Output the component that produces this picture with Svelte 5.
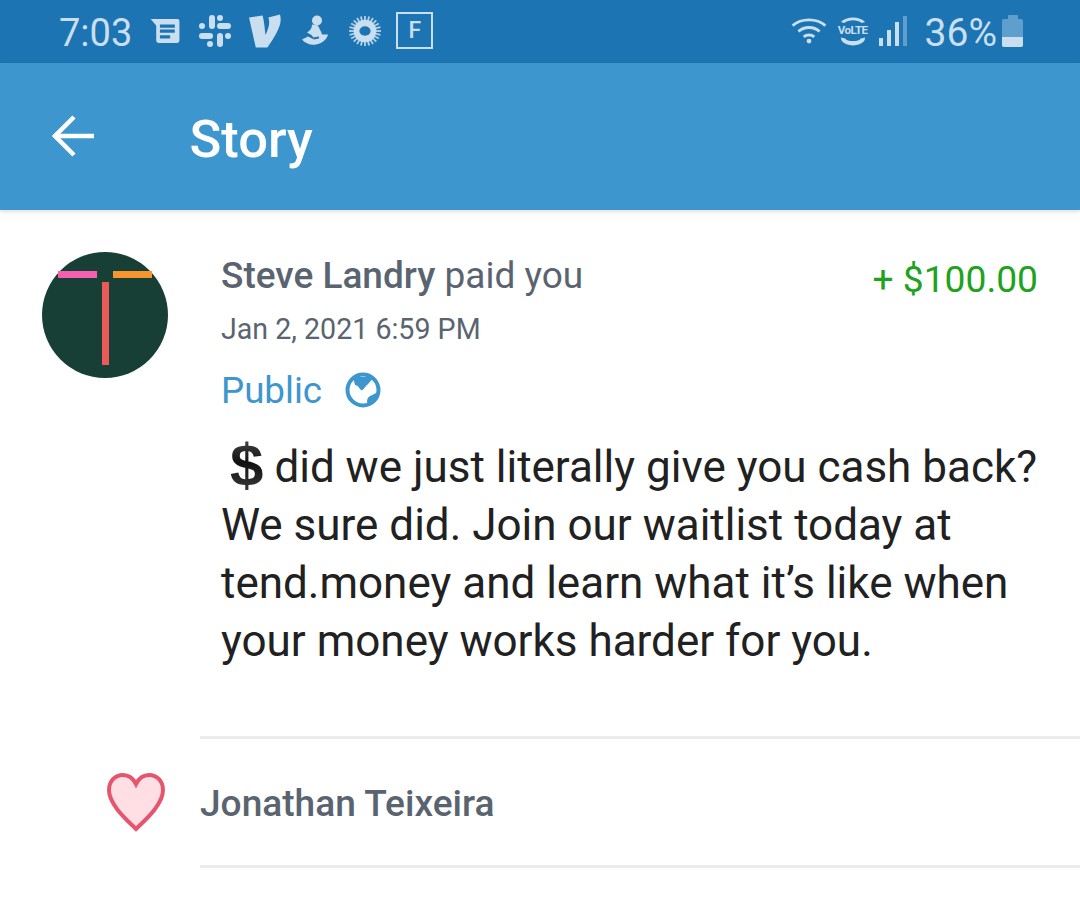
<script>
  const paragraph = [
    'did we just literally give you cash back?',
    'We sure did. Join our waitlist today at',
    'tend.money and learn what it’s like when',
    'your money works harder for you.'
  ];
</script>

<div class="page">
  <div class="status">
    <div class="status-left">
      <span class="time">7:03</span>
      <svg class="ic news" width="31" height="26" viewBox="0 0 32 28">
        <path fill="#c9dfef" d="M0 1H29a2 2 0 0 1 2 2V24a3 3 0 0 1-3 3H9a3 3 0 0 1-3-3V8Z"/>
        <path fill="#1c74b2" d="M10 7H26V10.500H10ZM10 12.500H26V16H10ZM10 18.500H21V22H10Z"/>
      </svg>
      <svg class="ic slack" width="32" height="32" viewBox="0 0 32 32" fill="#c9dfef">
        <rect x="10" y="0" width="6" height="14" rx="3"/>
        <rect x="18" y="18" width="6" height="14" rx="3"/>
        <rect x="0" y="18" width="14" height="6" rx="3"/>
        <rect x="18" y="8" width="14" height="6" rx="3"/>
        <circle cx="3" cy="11" r="3"/><circle cx="21" cy="3" r="3"/>
        <circle cx="29" cy="21" r="3"/><circle cx="11" cy="29" r="3"/>
      </svg>
      <svg class="ic venmo" width="32" height="34" viewBox="0 0 33 34">
        <path fill="#c9dfef" d="M0 3 14 1C15.500 6 16 13 17 21 20 15 22 9 20 3L32 0C33 4 33 8 31 13 29 19 24 27 19 34H7Z"/>
      </svg>
      <svg class="ic figure" width="27" height="31" viewBox="0 0 27 30" fill="#c9dfef">
        <circle cx="15" cy="5" r="5"/>
        <path d="M10 9 16 10C17 13 19 15 20 19L26 19C25 24 20 28 14 29 9 30 3 28 0 24L6 21 12 24C11 20 9 19 5 17 8 15 10 13 10 9Z"/>
        <path fill="#1c74b2" d="M11 22 17 21 17 23 12 24Z"/>
      </svg>
      <svg class="ic sun" width="34" height="32" viewBox="0 0 36 34">
        <g stroke="#c9dfef" stroke-width="2" opacity=".85">
          {#each Array(24) as _, i}
            <line x1="18" y1="17" x2={18 + 17 * Math.cos((i * Math.PI) / 12)} y2={17 + 16 * Math.sin((i * Math.PI) / 12)} />
          {/each}
        </g>
        <circle cx="18" cy="17" r="12" fill="#c9dfef"/>
        <ellipse cx="18" cy="17" rx="6" ry="5" fill="#1c74b2"/>
      </svg>
      <span class="fbox">F</span>
    </div>
    <div class="status-right">
      <svg class="ic" width="36" height="27" viewBox="0 0 36 28" fill="none" stroke="#c9dfef" stroke-width="3">
        <path d="M1 9C10 1 26 1 35 9"/><path d="M7 15C13 9.500 23 9.500 29 15"/><path d="M12.500 20.500C15.500 18 20.500 18 23.500 20.500"/>
        <circle cx="18" cy="25" r="2.500" fill="#c9dfef" stroke="none"/>
      </svg>
      <div class="volte">
        <svg width="26" height="7" viewBox="0 0 30 8"><path fill="#c9dfef" d="M1 7C7 0 23 0 29 7L25 8C20 4 10 4 5 8Z"/></svg>
        <span>VoLTE</span>
        <svg width="26" height="9" viewBox="0 0 30 9"><path fill="#c9dfef" d="M1 0 6 1C8 5 22 5 24 1L29 0C29 6 22 9 15 9 8 9 1 6 1 0Z"/></svg>
      </div>
      <div class="bars">
        <i style="height:8px"></i><i style="height:16px"></i><i style="height:24px"></i><i class="dim" style="height:30px"></i>
      </div>
      <span class="pct">36%</span>
      <div class="battery"><b></b><div class="cell"><div class="fill"></div></div></div>
    </div>
  </div>

  <header class="appbar">
    <svg width="42" height="42" viewBox="0 0 42 42" fill="none" stroke="#fff" stroke-width="4.500">
      <path d="M42 21H4"/><path d="M22 2 3 21 22 40"/>
    </svg>
    <h1>Story</h1>
  </header>

  <main class="story">
    <svg class="avatar" width="126" height="126" viewBox="0 0 126 126">
      <circle cx="63" cy="63" r="63" fill="#173f36"/>
      <rect x="16" y="19" width="39" height="7" fill="#f65fb0"/>
      <rect x="71" y="19" width="39" height="7" fill="#f7952f"/>
      <rect x="60" y="30" width="7" height="83" fill="#ea5a58"/>
    </svg>
    <div class="body">
      <div class="top">
        <div class="who"><strong>Steve Landry</strong> paid you</div>
        <div class="amount">+ $100.00</div>
      </div>
      <div class="date">Jan 2, 2021 6:59 PM</div>
      <div class="audience">
        <span>Public</span>
        <svg width="36" height="36" viewBox="0 0 36 36">
          <circle cx="18" cy="18" r="15.500" fill="#fff" stroke="#3d96ce" stroke-width="4"/>
          <path fill="#3d96ce" d="M8 5H29L24 11 21 14C19 16 18 19 16 18 14 16 13 13 10 13Z"/>
          <path fill="#3d96ce" d="M34 19C34 25 30 31 26 33 22 33 21 29 23 26 25 23 29 23 34 19Z"/>
        </svg>
      </div>
      <p class="message">
        {#each paragraph as line, i}
          <span class="line">{#if i === 0}<span class="dollar">$</span>{/if}{line}</span>
        {/each}
      </p>
    </div>
  </main>

  <div class="like-row">
    <div class="like-icon">
      <svg width="60" height="60" viewBox="0 0 60 60">
        <path fill="#ffdfe3" stroke="#e5566e" stroke-width="4" d="M30 56C22 48 3 32 3 17 3 8 9 2 17 2 23 2 27 5 30 11 33 5 37 2 43 2 51 2 57 8 57 17 57 32 38 48 30 56Z"/>
      </svg>
    </div>
    <div class="like-name">Jonathan Teixeira</div>
  </div>
</div>

<style>
  :global(body) { margin: 0; background: #fff; }
  .page { width: 1080px; height: 917px; overflow: hidden; font-family: Roboto, sans-serif; background: #fff; }

  .status { height: 63px; background: #1c74b2; color: #c9dfef; display: flex; justify-content: space-between; align-items: center; padding: 0 57px 2px 59px; box-sizing: border-box; }
  .status-left, .status-right { display: flex; align-items: center; }
  .time { font-size: 38px; margin: 4px 18px 0 0; }
  .ic { display: block; flex: none; }
  .slack { margin-left: 18px; }
  .venmo { margin-left: 18px; }
  .figure { margin-left: 21px; }
  .sun { margin-left: 19px; }
  .fbox { margin-left: 14px; width: 37px; height: 37px; box-sizing: border-box; border: 2px solid #c9dfef; font-size: 23px; font-weight: 500; display: flex; align-items: center; justify-content: center; }
  .volte { margin-left: 10px; width: 32px; display: flex; flex-direction: column; align-items: center; gap: 1px; }
  .volte span { font-size: 11.500px; font-weight: 700; line-height: 12px; letter-spacing: -.5px; }
  .volte svg { display: block; }
  .bars { margin-left: 10px; height: 30px; display: flex; align-items: flex-end; gap: 4px; }
  .bars i { width: 4px; background: #c9dfef; display: block; }
  .bars i.dim { background: #5f9fcd; }
  .pct { font-size: 39px; margin: 4px 0 0 18px; }
  .battery { margin-left: 5px; width: 21px; display: flex; flex-direction: column; align-items: center; }
  .battery b { width: 10px; height: 4px; background: #5f9fcd; border-radius: 1px 1px 0 0; display: block; }
  .cell { width: 21px; height: 28px; background: #5f9fcd; border-radius: 2px; display: flex; align-items: flex-end; overflow: hidden; }
  .fill { width: 100%; height: 10px; background: #c9dfef; }

  .appbar { height: 147px; background: #3d96ce; display: flex; align-items: center; padding-left: 52px; box-shadow: 0 2px 4px rgba(0,0,0,.12); position: relative; }
  .appbar svg { display: block; margin-top: -1px; }
  h1 { margin: 4px 0 0 95.500px; font-size: 52.500px; font-weight: 500; color: #fff; }

  .story { display: flex; padding: 42px 42px 0 42px; height: 526px; box-sizing: border-box; }
  .avatar { display: block; flex: none; }
  .body { margin-left: 53px; flex: 1; }
  .top { display: flex; justify-content: space-between; align-items: flex-start; color: #5a6470; }
  .who { font-size: 37px; line-height: 44px; margin-top: 2px; }
  .who strong { font-weight: 500; }
  .amount { font-size: 37.200px; line-height: 44px; margin-top: 5px; color: #20a31c; }
  .date { font-size: 28.600px; color: #5a6470; line-height: 36px; margin-top: 10px; }
  .audience { display: flex; align-items: center; color: #3d96ce; font-size: 36.700px; margin-top: 21px; height: 44px; }
  .audience svg { margin-left: 23px; display: block; }
  .message { margin: 26px 0 0; font-size: 44px; line-height: 58px; color: #212121; }
  .line { display: block; white-space: nowrap; }
  .dollar { font-size: 60px; font-weight: 700; font-family: "Liberation Sans", sans-serif; background: linear-gradient(#555, #111 45%, #444); -webkit-background-clip: text; background-clip: text; color: transparent; margin: 0 11px 0 9px; line-height: 40px; vertical-align: -4px; }

  .like-row { display: flex; height: 132px; }
  .like-icon { width: 200px; flex: none; display: flex; align-items: center; justify-content: flex-start; padding: 2px 0 0 106px; box-sizing: border-box; }
  .like-icon svg { display: block; }
  .like-name { flex: 1; border-top: 3px solid #ebebeb; border-bottom: 3px solid #ebebeb; display: flex; align-items: center; font-size: 37.100px; font-weight: 500; color: #5a6470; box-sizing: border-box; padding-top: 2px; }
</style>
